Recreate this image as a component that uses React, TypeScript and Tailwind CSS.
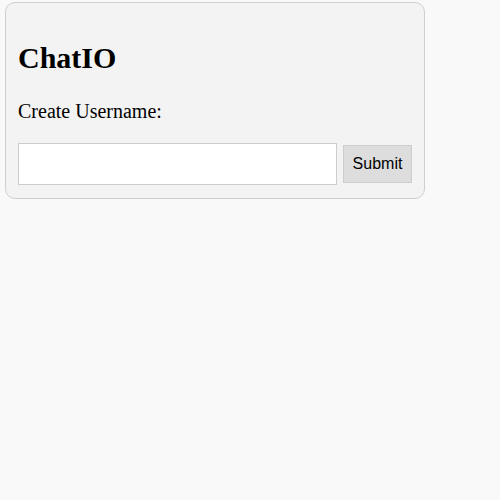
export default function App() {
  return (
    <div className="min-h-[500px] w-full bg-[#f9f9f9] pt-[2px] pl-[5px]" style={{ fontFamily: '"Liberation Serif", serif' }}>
      <div className="w-[420px] rounded-[10px] border border-[#cfcfcf] bg-[#f3f3f3] px-[12px] pb-[13px] pt-[12px]">
        <h1 className="mt-[26px] text-[30px] font-bold leading-[33px] text-black">ChatIO</h1>
        <p className="mt-[26px] text-[20px] leading-[22px] text-black">Create Username:</p>
        <div className="mt-[21px] flex items-center gap-[6px]">
          <input type="text" className="h-[42px] min-w-0 flex-1 border border-[#cccccc] bg-white px-2 outline-none" />
          <button
            className="h-[38px] w-[69px] border border-[#cccccc] bg-[#dddddd] text-[16px] text-black"
            style={{ fontFamily: '"Liberation Sans", Arial, sans-serif' }}
          >
            Submit
          </button>
        </div>
      </div>
    </div>
  );
}
